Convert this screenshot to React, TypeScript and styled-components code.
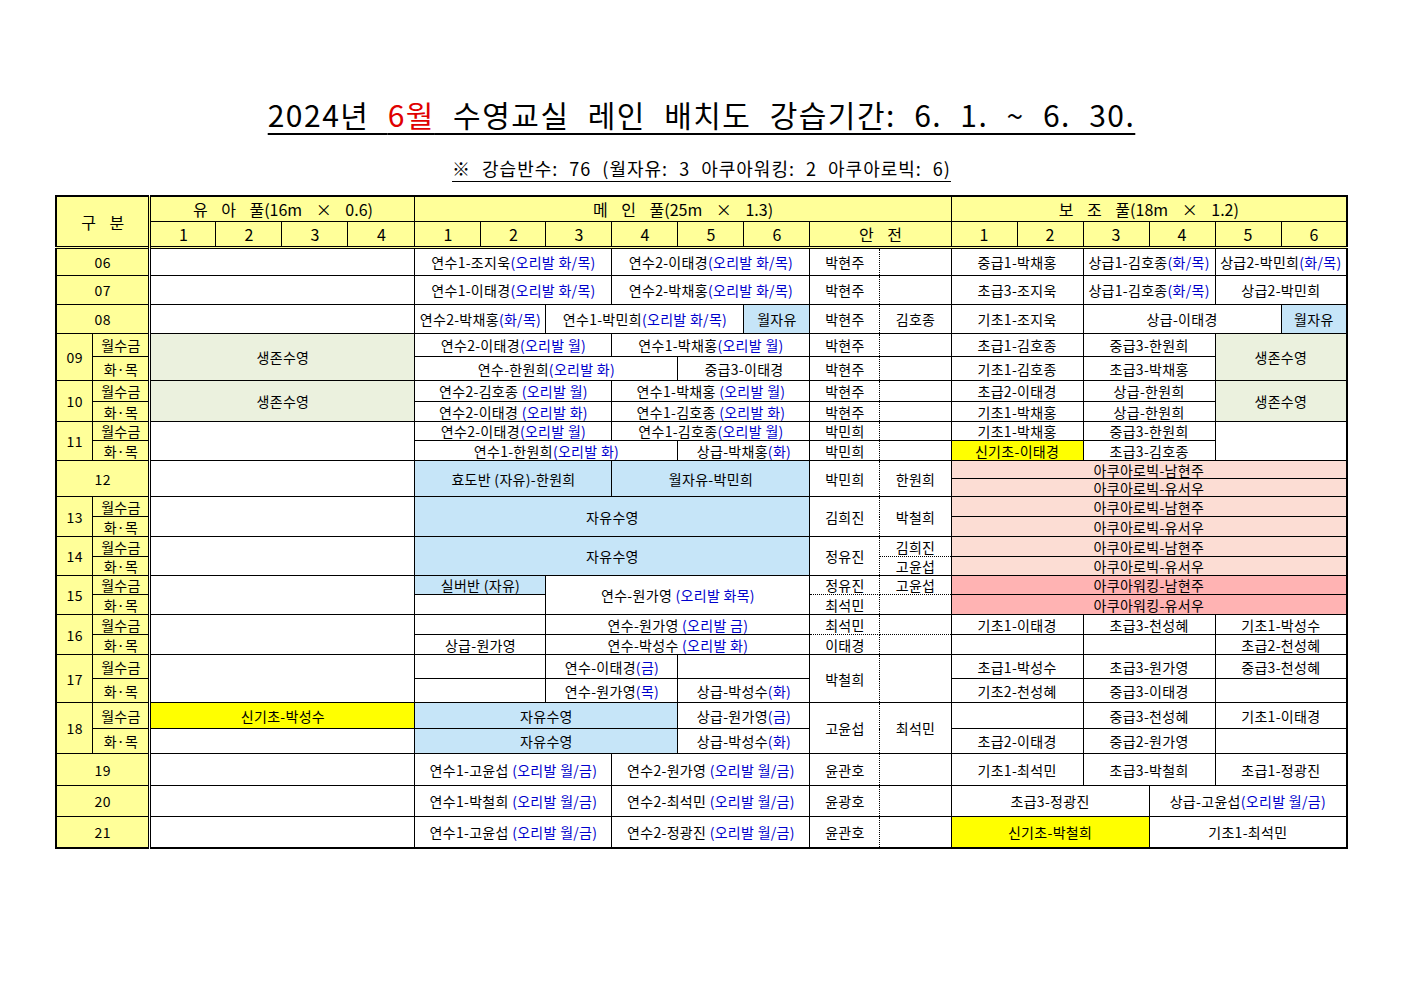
import React from 'react';
import styled, { createGlobalStyle } from 'styled-components';

const Global = createGlobalStyle`
  body { margin: 0; background: #fff; font-family: "Noto Sans CJK KR", "Noto Sans", sans-serif; color: #000; }
`;

const YEL = '#ffff99';
const GRN = '#ebf1de';
const BLU = '#c6e5f8';
const PNK = '#fcddd4';
const RED = '#ffb3b3';
const SUN = '#ffff00';

type C = { t: string; b?: string; cs?: number; rs?: number; bg?: string; dl?: boolean; dr?: boolean; dot?: boolean; dotB?: boolean; dotT?: boolean };
const c = (t: string, cs = 1, o: Partial<C> = {}): C => ({ t, cs, ...o });
// text with blue suffix
const cb = (t: string, b: string, cs = 1, o: Partial<C> = {}): C => ({ t, b, cs, ...o });

type R = { h: number; cells: C[]; top?: boolean };

const S1 = (t: string, o: Partial<C> = {}) => c(t, 1, { dr: true, ...o });
const S2 = (t: string, o: Partial<C> = {}) => c(t, 1, { dot: true, ...o });

const rows: R[] = [
  { h: 28, top: true, cells: [c('06', 2, { bg: YEL }), c('', 4, { dl: true }), cb('연수1-조지욱', '(오리발 화/목)', 3), cb('연수2-이태경', '(오리발 화/목)', 3), S1('박현주'), S2(''), c('중급1-박채홍', 2), cb('상급1-김호종', '(화/목)', 2), cb('상급2-박민희', '(화/목)', 2)] },
  { h: 29, cells: [c('07', 2, { bg: YEL }), c('', 4, { dl: true }), cb('연수1-이태경', '(오리발 화/목)', 3), cb('연수2-박채홍', '(오리발 화/목)', 3), S1('박현주'), S2(''), c('초급3-조지욱', 2), cb('상급1-김호종', '(화/목)', 2), c('상급2-박민희', 2)] },
  { h: 29, cells: [c('08', 2, { bg: YEL }), c('', 4, { dl: true }), cb('연수2-박채홍', '(화/목)', 2), cb('연수1-박민희', '(오리발 화/목)', 3), c('월자유', 1, { bg: BLU }), S1('박현주'), S2('김호종'), c('기초1-조지욱', 2), c('상급-이태경', 3), c('월자유', 1, { bg: BLU })] },
  { h: 23, cells: [c('09', 1, { rs: 2, bg: YEL }), c('월수금', 1, { bg: YEL }), c('생존수영', 4, { rs: 2, bg: GRN, dl: true }), cb('연수2-이태경', '(오리발 월)', 3), cb('연수1-박채홍', '(오리발 월)', 3), S1('박현주'), S2(''), c('초급1-김호종', 2), c('중급3-한원희', 2), c('생존수영', 2, { rs: 2, bg: GRN })] },
  { h: 24, cells: [c('화·목', 1, { bg: YEL }), cb('연수-한원희', '(오리발 화)', 4), c('중급3-이태경', 2), S1('박현주'), S2(''), c('기초1-김호종', 2), c('초급3-박채홍', 2)] },
  { h: 21, cells: [c('10', 1, { rs: 2, bg: YEL }), c('월수금', 1, { bg: YEL }), c('생존수영', 4, { rs: 2, bg: GRN, dl: true }), cb('연수2-김호종 ', '(오리발 월)', 3), cb('연수1-박채홍 ', '(오리발 월)', 3), S1('박현주'), S2(''), c('초급2-이태경', 2), c('상급-한원희', 2), c('생존수영', 2, { rs: 2, bg: GRN })] },
  { h: 20, cells: [c('화·목', 1, { bg: YEL }), cb('연수2-이태경 ', '(오리발 화)', 3), cb('연수1-김호종 ', '(오리발 화)', 3), S1('박현주'), S2(''), c('기초1-박채홍', 2), c('상급-한원희', 2)] },
  { h: 19, cells: [c('11', 1, { rs: 2, bg: YEL }), c('월수금', 1, { bg: YEL }), c('', 4, { rs: 2, dl: true }), cb('연수2-이태경', '(오리발 월)', 3), cb('연수1-김호종', '(오리발 월)', 3), S1('박민희'), S2(''), c('기초1-박채홍', 2), c('중급3-한원희', 2), c('', 2, { rs: 2 })] },
  { h: 20, cells: [c('화·목', 1, { bg: YEL }), cb('연수1-한원희', '(오리발 화)', 4), cb('상급-박채홍', '(화)', 2), S1('박민희'), S2(''), c('신기초-이태경', 2, { bg: SUN }), c('초급3-김호종', 2)] },
  { h: 18, cells: [c('12', 2, { rs: 2, bg: YEL }), c('', 4, { rs: 2, dl: true }), c('효도반 (자유)-한원희', 3, { rs: 2, bg: BLU }), c('월자유-박민희', 3, { rs: 2, bg: BLU }), S1('박민희', { rs: 2 }), S2('한원희', { rs: 2 }), c('아쿠아로빅-남현주', 6, { bg: PNK })] },
  { h: 18, cells: [c('아쿠아로빅-유서우', 6, { bg: PNK })] },
  { h: 20, cells: [c('13', 1, { rs: 2, bg: YEL }), c('월수금', 1, { bg: YEL }), c('', 4, { rs: 2, dl: true }), c('자유수영', 6, { rs: 2, bg: BLU }), S1('김희진', { rs: 2 }), S2('박철희', { rs: 2 }), c('아쿠아로빅-남현주', 6, { bg: PNK })] },
  { h: 20, cells: [c('화·목', 1, { bg: YEL }), c('아쿠아로빅-유서우', 6, { bg: PNK })] },
  { h: 20, cells: [c('14', 1, { rs: 2, bg: YEL }), c('월수금', 1, { bg: YEL }), c('', 4, { rs: 2, dl: true }), c('자유수영', 6, { rs: 2, bg: BLU }), S1('정유진', { rs: 2 }), S2('김희진', { dotB: true }), c('아쿠아로빅-남현주', 6, { bg: PNK })] },
  { h: 19, cells: [c('화·목', 1, { bg: YEL }), S2('고윤섭', { dotT: true }), c('아쿠아로빅-유서우', 6, { bg: PNK })] },
  { h: 19, cells: [c('15', 1, { rs: 2, bg: YEL }), c('월수금', 1, { bg: YEL }), c('', 4, { rs: 2, dl: true }), c('실버반 (자유)', 2, { bg: BLU }), cb('연수-원가영 ', '(오리발 화목)', 4, { rs: 2 }), S1('정유진', { dotB: true }), S2('고윤섭', { dotB: true }), c('아쿠아워킹-남현주', 6, { bg: RED })] },
  { h: 20, cells: [c('화·목', 1, { bg: YEL }), c('', 2), S1('최석민', { dotT: true }), S2('', { dotT: true }), c('아쿠아워킹-유서우', 6, { bg: RED })] },
  { h: 20, cells: [c('16', 1, { rs: 2, bg: YEL }), c('월수금', 1, { bg: YEL }), c('', 4, { rs: 2, dl: true }), c('', 2), cb('연수-원가영 ', '(오리발 금)', 4), S1('최석민', { dotB: true }), S2('', { dotB: true }), c('기초1-이태경', 2), c('초급3-천성혜', 2), c('기초1-박성수', 2)] },
  { h: 20, cells: [c('화·목', 1, { bg: YEL }), c('상급-원가영', 2), cb('연수-박성수 ', '(오리발 화)', 4), S1('이태경', { dotT: true }), S2('', { dotT: true }), c('', 2), c('', 2), c('초급2-천성혜', 2)] },
  { h: 24, cells: [c('17', 1, { rs: 2, bg: YEL }), c('월수금', 1, { bg: YEL }), c('', 4, { rs: 2, dl: true }), c('', 2), cb('연수-이태경', '(금)', 2), c('', 2), S1('박철희', { rs: 2 }), S2('', { rs: 2 }), c('초급1-박성수', 2), c('초급3-원가영', 2), c('중급3-천성혜', 2)] },
  { h: 24, cells: [c('화·목', 1, { bg: YEL }), c('', 2), cb('연수-원가영', '(목)', 2), cb('상급-박성수', '(화)', 2), c('기초2-천성혜', 2), c('중급3-이태경', 2), c('', 2)] },
  { h: 26, cells: [c('18', 1, { rs: 2, bg: YEL }), c('월수금', 1, { bg: YEL }), c('신기초-박성수', 4, { bg: SUN, dl: true }), c('자유수영', 4, { bg: BLU }), cb('상급-원가영', '(금)', 2), S1('고윤섭', { rs: 2 }), S2('최석민', { rs: 2 }), c('', 2), c('중급3-천성혜', 2), c('기초1-이태경', 2)] },
  { h: 25, cells: [c('화·목', 1, { bg: YEL }), c('', 4, { dl: true }), c('자유수영', 4, { bg: BLU }), cb('상급-박성수', '(화)', 2), c('초급2-이태경', 2), c('중급2-원가영', 2), c('', 2)] },
  { h: 32, cells: [c('19', 2, { bg: YEL }), c('', 4, { dl: true }), cb('연수1-고윤섭 ', '(오리발 월/금)', 3), cb('연수2-원가영 ', '(오리발 월/금)', 3), S1('윤관호'), S2(''), c('기초1-최석민', 2), c('초급3-박철희', 2), c('초급1-정광진', 2)] },
  { h: 31, cells: [c('20', 2, { bg: YEL }), c('', 4, { dl: true }), cb('연수1-박철희 ', '(오리발 월/금)', 3), cb('연수2-최석민 ', '(오리발 월/금)', 3), S1('윤광호'), S2(''), c('초급3-정광진', 3), cb('상급-고윤섭', '(오리발 월/금)', 3)] },
  { h: 31, cells: [c('21', 2, { bg: YEL }), c('', 4, { dl: true }), cb('연수1-고윤섭 ', '(오리발 월/금)', 3), cb('연수2-정광진 ', '(오리발 월/금)', 3), S1('윤관호'), S2(''), c('신기초-박철희', 3, { bg: SUN }), c('기초1-최석민', 3)] },
];

const widths = [37, 57, 66, 66, 66, 67, 66, 65, 66, 66, 66, 66, 70, 71, 66, 66, 66, 66, 66, 66];

const Page = styled.div`
  width: 1403px;
  padding-top: 95px;
  display: flex;
  flex-direction: column;
  align-items: center;
`;

const Title = styled.h1`
  margin: 0;
  font-size: 30px;
  font-weight: 400;
  letter-spacing: 1.5px;
  word-spacing: 10px;
  line-height: 38px;
  text-decoration: underline;
  text-underline-offset: 6px;
  text-decoration-thickness: 2px;
  span { color: #e00000; }
`;

const Sub = styled.div`
  margin-top: 22px;
  font-size: 18px;
  line-height: 26px;
  letter-spacing: 1px;
  word-spacing: 6px;
  text-decoration: underline;
  text-underline-offset: 5px;
`;

const Table = styled.table`
  margin-top: 14px;
  border-collapse: collapse;
  table-layout: fixed;
  width: 1291px;
  border: 2px solid #000;
  font-size: 14px;
`;

const Th = styled.th<{ $dl?: boolean }>`
  background: ${YEL};
  border: 1px solid #000;
  ${p => p.$dl && 'border-left: 3px double #000;'}
  font-weight: 400;
  font-size: 16px;
  padding: 0;
  text-align: center;
  white-space: nowrap;
  word-spacing: 10px;
`;

const Td = styled.td<{ $bg?: string; $dl?: boolean; $dr?: boolean; $dot?: boolean; $dotB?: boolean; $dotT?: boolean; $top?: boolean }>`
  background: ${p => p.$bg || '#fff'};
  border: 1px solid #000;
  ${p => p.$dl && 'border-left: 3px double #000;'}
  ${p => p.$dr && 'border-right: 1px dotted #000;'}
  ${p => p.$dot && 'border-left: 1px dotted #000;'}
  ${p => p.$dotB && 'border-bottom: 1px dotted #000;'}
  ${p => p.$dotT && 'border-top: 1px dotted #000;'}
  ${p => p.$top && 'border-top: 3px double #000;'}
  padding: 0;
  text-align: center;
  white-space: nowrap;
  overflow: hidden;
  line-height: 16px;
  letter-spacing: 0.3px;
`;

const Blue = styled.span`
  color: #0000cc;
`;

export default function App() {
  return (
    <Page>
      <Global />
      <Title>2024년 <span>6월</span> 수영교실 레인 배치도 강습기간: 6. 1. ~ 6. 30.</Title>
      <Sub>※ 강습반수: 76 (월자유: 3 아쿠아워킹: 2 아쿠아로빅: 6)</Sub>
      <Table>
        <colgroup>
          {widths.map((w, i) => <col key={i} style={{ width: w }} />)}
        </colgroup>
        <thead>
          <tr style={{ height: 25 }}>
            <Th colSpan={2} rowSpan={2}>구 분</Th>
            <Th colSpan={4} $dl>유 아 풀(16m × 0.6)</Th>
            <Th colSpan={8}>메 인 풀(25m × 1.3)</Th>
            <Th colSpan={6}>보 조 풀(18m × 1.2)</Th>
          </tr>
          <tr style={{ height: 24 }}>
            {[1, 2, 3, 4].map(n => <Th key={'a' + n} $dl={n === 1}>{n}</Th>)}
            {[1, 2, 3, 4, 5, 6].map(n => <Th key={'m' + n}>{n}</Th>)}
            <Th colSpan={2}>안 전</Th>
            {[1, 2, 3, 4, 5, 6].map(n => <Th key={'b' + n}>{n}</Th>)}
          </tr>
        </thead>
        <tbody>
          {rows.map((r, i) => (
            <tr key={i} style={{ height: r.h }}>
              {r.cells.map((x, j) => (
                <Td key={j} colSpan={x.cs} rowSpan={x.rs} $bg={x.bg} $dl={x.dl} $dr={x.dr} $dot={x.dot}
                  $dotB={x.dotB} $dotT={x.dotT} $top={r.top}>
                  {x.t}{x.b && <Blue>{x.b}</Blue>}
                </Td>
              ))}
            </tr>
          ))}
        </tbody>
      </Table>
    </Page>
  );
}
